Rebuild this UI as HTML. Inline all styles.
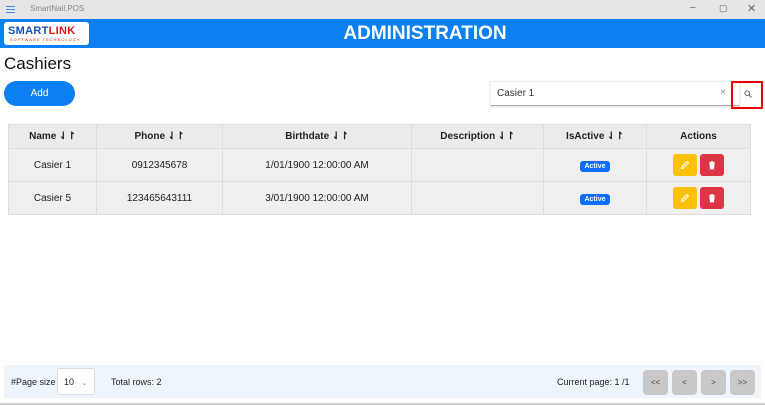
<!DOCTYPE html>
<html><head><style>
*{box-sizing:border-box;margin:0;padding:0}
body{width:765px;height:405px;overflow:hidden;background:#fff;font-family:"Liberation Sans",sans-serif;position:relative;color:#222}
.tb{position:absolute;left:0;top:0;width:765px;height:19px;background:#e6e6e6}
.hdr{position:absolute;left:0;top:19px;width:765px;height:29px;background:#0c7ff2}
.logo{position:absolute;left:4px;top:22px;width:85px;height:23px;background:#fff;border-radius:3px}
.abs{position:absolute}
table{position:absolute;left:8px;top:124px;width:743px;border-collapse:collapse;font-size:10px}
td,th{border:1px solid #ddd;text-align:center;background:#efefef;padding:0}
th{height:24px;font-size:10px;font-weight:bold;background:#ebebeb}
td{height:33px}
.badge{background:#0d6efd;color:#fff;font-weight:bold;font-size:7px;padding:2px 4px;border-radius:3px}
.acts{display:flex;justify-content:center;gap:3px}
.btn{width:24px;height:22px;border-radius:3px;display:flex;align-items:center;justify-content:center}
.pg{position:absolute;top:370px;width:25px;height:25px;background:#c8c8c8;border-radius:4px;font-size:8px;text-align:center;line-height:25px;color:#444}
</style></head><body>
<div class="tb">
 <div class="abs" style="left:6px;top:6px;width:9px;height:1px;background:#3b8de0;box-shadow:0 3px #3b8de0,0 6px #3b8de0"></div>
 <div class="abs" style="left:30px;top:4px;font-size:8px;color:#888">SmartNail.POS</div>
 <div class="abs" style="left:690px;top:2px;font-size:10px;color:#666">–</div>
 <div class="abs" style="left:719px;top:3px;font-size:9px;color:#666">▢</div>
 <div class="abs" style="left:747px;top:2px;font-size:11px;color:#666">✕</div>
</div>
<div class="hdr"><div class="abs" style="left:0;width:850px;top:4px;text-align:center;color:#fff;font-size:19px;font-weight:bold">ADMINISTRATION</div></div>
<div class="logo">
 <div class="abs" style="left:4px;top:3px;font-size:11px;font-weight:bold;letter-spacing:0.3px;color:#1350b4">SMART<span style="color:#e11">LINK</span></div>
 <div class="abs" style="left:6px;top:15px;font-size:4px;color:#e11;letter-spacing:1px">SOFTWARE TECHNOLOGY</div>
</div>
<div class="abs" style="left:4px;top:54px;font-size:17px;color:#111">Cashiers</div>
<div class="abs" style="left:4px;top:81px;width:71px;height:25px;background:#0c7ff2;border-radius:13px;color:#fff;font-size:10px;text-align:center;line-height:26px">Add</div>
<div class="abs" style="left:490px;top:81px;width:250px;height:25px;background:#fff;border:1px solid #eee;border-bottom:1px solid #aaa;box-shadow:0 1px 2px #ddd"></div>
<div class="abs" style="left:497px;top:88px;font-size:10px;color:#333">Casier 1</div>
<div class="abs" style="left:720px;top:87px;font-size:10px;color:#888">×</div>
<div class="abs" style="left:731px;top:81px;width:32px;height:28px;border:2px solid #e00;"></div>
<svg class="abs" style="left:744px;top:90px" width="8" height="8" viewBox="0 0 8 8"><circle cx="3.2" cy="3.2" r="2.3" fill="none" stroke="#666" stroke-width="1"/><path d="M5 5L7.5 7.5" stroke="#666" stroke-width="1"/></svg>
<table>
<tr><th style="width:88px">Name ⇃↾</th><th style="width:126px">Phone ⇃↾</th><th style="width:189px">Birthdate ⇃↾</th><th style="width:132px">Description ⇃↾</th><th style="width:103px">IsActive ⇃↾</th><th>Actions</th></tr>
<tr><td>Casier 1</td><td>0912345678</td><td>1/01/1900 12:00:00 AM</td><td></td><td><span class="badge">Active</span></td><td><div class="acts"><div class="btn" style="background:#fcc10a"><svg width="10" height="10" viewBox="0 0 10 10"><path d="M1.5 8.5L2 6.5L7 1.5L8.5 3L3.5 8Z" fill="none" stroke="#fff" stroke-width="1"/></svg></div><div class="btn" style="background:#dc3545"><svg width="10" height="10" viewBox="0 0 10 10"><path d="M2 2.5H8M4 2.5V1.5H6V2.5M2.8 3.5L3.3 9H6.7L7.2 3.5Z" fill="#fff" stroke="#fff" stroke-width="0.8"/></svg></div></div></td></tr>
<tr><td>Casier 5</td><td>123465643111</td><td>3/01/1900 12:00:00 AM</td><td></td><td><span class="badge">Active</span></td><td><div class="acts"><div class="btn" style="background:#fcc10a"><svg width="10" height="10" viewBox="0 0 10 10"><path d="M1.5 8.5L2 6.5L7 1.5L8.5 3L3.5 8Z" fill="none" stroke="#fff" stroke-width="1"/></svg></div><div class="btn" style="background:#dc3545"><svg width="10" height="10" viewBox="0 0 10 10"><path d="M2 2.5H8M4 2.5V1.5H6V2.5M2.8 3.5L3.3 9H6.7L7.2 3.5Z" fill="#fff" stroke="#fff" stroke-width="0.8"/></svg></div></div></td></tr>
</table>
<div class="abs" style="left:4px;top:365px;width:757px;height:33px;background:#eef5fd"></div>
<div class="abs" style="left:11px;top:377px;font-size:9px">#Page size</div>
<div class="abs" style="left:57px;top:368px;width:38px;height:27px;background:#fff;border:1px solid #ddd;border-radius:3px;font-size:9px;padding:8px 0 0 6px">10 <span style="font-size:7px;color:#888;margin-left:5px">⌄</span></div>
<div class="abs" style="left:111px;top:377px;font-size:9px">Total rows: 2</div>
<div class="abs" style="left:557px;top:377px;font-size:9px">Current page: 1 /1</div>
<div class="pg" style="left:643px">&lt;&lt;</div>
<div class="pg" style="left:672px">&lt;</div>
<div class="pg" style="left:701px">&gt;</div>
<div class="pg" style="left:730px">&gt;&gt;</div>
<div class="abs" style="left:0;top:403px;width:765px;height:2px;background:#ccc"></div>
</body></html>
